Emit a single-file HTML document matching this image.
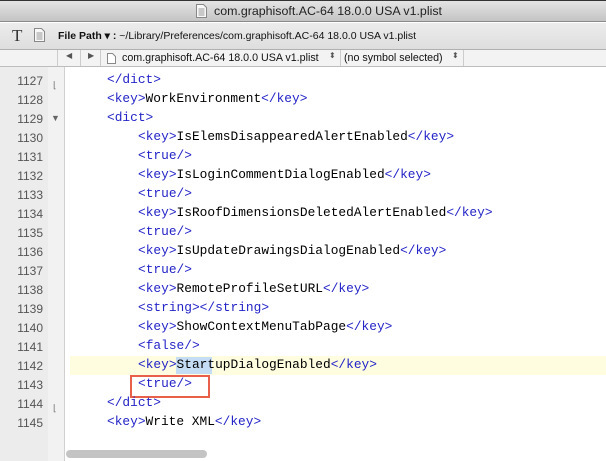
<!DOCTYPE html>
<html><head><style>
body{margin:0;width:606px;height:461px;overflow:hidden;background:#fff;font-family:"Liberation Sans",sans-serif;position:relative}
#title{position:absolute;left:0;top:0;width:606px;height:22px;background:linear-gradient(#e4e4e4,#c4c4c4);border-top:1px solid #333;box-sizing:border-box;border-bottom:1px solid #8a8a8a;font-size:12.4px;color:#222;}
#title span{position:absolute;left:214px;top:3px}
#tb{position:absolute;left:0;top:23px;width:606px;height:26px;background:linear-gradient(#ececec,#dedede);border-bottom:1px solid #b0b0b0;font-size:10.5px;}
#nav{position:absolute;left:0;top:50px;width:606px;height:16px;background:#f3f3f3;border-bottom:1px solid #bdbdbd;font-size:10.7px;color:#111}
#gut{position:absolute;left:0;top:67px;width:48px;height:394px;background:#ececec}
#fold{position:absolute;left:48px;top:67px;width:16px;height:394px;background:#f2f2f2;border-right:1px solid #d0d0d0}
.ln{position:absolute;left:0;width:43px;text-align:right;font-size:12px;color:#555;font-family:"Liberation Sans",sans-serif}
.c{position:absolute;font-family:"Liberation Mono",monospace;font-size:12.85px;color:#000;white-space:pre}
.t{color:#2424c8}
</style></head><body>
<div id="title"><svg style="position:absolute;left:196px;top:3px" width="11" height="14"><path d="M.5 .5h7l3 3v10H.5z" fill="#f8f8f8" stroke="#888"/><path d="M2.5 5h6M2.5 7h6M2.5 9h6M2.5 11h6" stroke="#999"/></svg><span>com.graphisoft.AC-64 18.0.0 USA v1.plist</span></div>
<div id="tb"><span style="position:absolute;left:12px;top:3px;font-family:'Liberation Serif',serif;font-size:17px;color:#333">T</span><svg style="position:absolute;left:34px;top:5px" width="11" height="14"><path d="M.5 .5h7l3 3v10H.5z" fill="#f8f8f8" stroke="#888"/><path d="M2.5 5h6M2.5 7h6M2.5 9h6M2.5 11h6" stroke="#999"/></svg><span style="position:absolute;left:58px;top:7px;color:#111"><b>File Path ▾ :</b> ~/Library/Preferences/com.graphisoft.AC-64 18.0.0 USA v1.plist</span></div>
<div id="nav">
<span style="position:absolute;left:57px;top:0;height:16px;border-left:1px solid #ccc"></span>
<span style="position:absolute;left:66px;top:1px;font-size:8px;color:#555">◀</span>
<span style="position:absolute;left:80px;top:0;height:16px;border-left:1px solid #ccc"></span>
<span style="position:absolute;left:88px;top:1px;font-size:8px;color:#555">▶</span>
<span style="position:absolute;left:100px;top:0;height:16px;border-left:1px solid #ccc"></span>
<svg style="position:absolute;left:107px;top:3px" width="9" height="11"><path d="M.5 .5h5l3 3v7H.5z" fill="#fff" stroke="#888"/></svg>
<span style="position:absolute;left:122px;top:2px">com.graphisoft.AC-64 18.0.0 USA v1.plist</span>
<span style="position:absolute;left:329px;top:1px;font-size:8px;color:#555">⬍</span>
<span style="position:absolute;left:340px;top:0;height:16px;border-left:1px solid #ccc"></span>
<span style="position:absolute;left:344px;top:2px">(no symbol selected)</span>
<span style="position:absolute;left:452px;top:1px;font-size:8px;color:#555">⬍</span>
<span style="position:absolute;left:463px;top:0;height:16px;border-left:1px solid #ccc"></span>
</div>
<div id="gut"></div><div id="fold"></div>
<div style="position:absolute;left:70px;top:356px;width:536px;height:19px;background:#fefde0"></div>
<div style="position:absolute;left:176px;top:357px;width:36px;height:17px;background:#c5dcf5"></div>
<div style="position:absolute;left:130px;top:375px;width:76px;height:19px;border:2px solid #e8604a"></div>
<div style="position:absolute;left:66px;top:450px;width:141px;height:8px;border-radius:4px;background:#c4c4c4"></div>
<span style="position:absolute;left:53px;top:80px;font-size:9px;color:#777">⌊</span>
<span style="position:absolute;left:51px;top:113px;font-size:9px;color:#666">▼</span>
<span style="position:absolute;left:53px;top:403px;font-size:9px;color:#777">⌊</span>
<div class="ln" style="top:74px">1127</div><div class="c" style="left:107px;top:72px"><span class="t">&lt;/dict&gt;</span></div>
<div class="ln" style="top:93px">1128</div><div class="c" style="left:107px;top:91px"><span class="t">&lt;key&gt;</span>WorkEnvironment<span class="t">&lt;/key&gt;</span></div>
<div class="ln" style="top:112px">1129</div><div class="c" style="left:107px;top:110px"><span class="t">&lt;dict&gt;</span></div>
<div class="ln" style="top:131px">1130</div><div class="c" style="left:138px;top:129px"><span class="t">&lt;key&gt;</span>IsElemsDisappearedAlertEnabled<span class="t">&lt;/key&gt;</span></div>
<div class="ln" style="top:150px">1131</div><div class="c" style="left:138px;top:148px"><span class="t">&lt;true/&gt;</span></div>
<div class="ln" style="top:169px">1132</div><div class="c" style="left:138px;top:167px"><span class="t">&lt;key&gt;</span>IsLoginCommentDialogEnabled<span class="t">&lt;/key&gt;</span></div>
<div class="ln" style="top:188px">1133</div><div class="c" style="left:138px;top:186px"><span class="t">&lt;true/&gt;</span></div>
<div class="ln" style="top:207px">1134</div><div class="c" style="left:138px;top:205px"><span class="t">&lt;key&gt;</span>IsRoofDimensionsDeletedAlertEnabled<span class="t">&lt;/key&gt;</span></div>
<div class="ln" style="top:226px">1135</div><div class="c" style="left:138px;top:224px"><span class="t">&lt;true/&gt;</span></div>
<div class="ln" style="top:245px">1136</div><div class="c" style="left:138px;top:243px"><span class="t">&lt;key&gt;</span>IsUpdateDrawingsDialogEnabled<span class="t">&lt;/key&gt;</span></div>
<div class="ln" style="top:264px">1137</div><div class="c" style="left:138px;top:262px"><span class="t">&lt;true/&gt;</span></div>
<div class="ln" style="top:283px">1138</div><div class="c" style="left:138px;top:281px"><span class="t">&lt;key&gt;</span>RemoteProfileSetURL<span class="t">&lt;/key&gt;</span></div>
<div class="ln" style="top:302px">1139</div><div class="c" style="left:138px;top:300px"><span class="t">&lt;string&gt;&lt;/string&gt;</span></div>
<div class="ln" style="top:321px">1140</div><div class="c" style="left:138px;top:319px"><span class="t">&lt;key&gt;</span>ShowContextMenuTabPage<span class="t">&lt;/key&gt;</span></div>
<div class="ln" style="top:340px">1141</div><div class="c" style="left:138px;top:338px"><span class="t">&lt;false/&gt;</span></div>
<div class="ln" style="top:359px">1142</div><div class="c" style="left:138px;top:357px"><span class="t">&lt;key&gt;</span>StartupDialogEnabled<span class="t">&lt;/key&gt;</span></div>
<div class="ln" style="top:378px">1143</div><div class="c" style="left:138px;top:376px"><span class="t">&lt;true/&gt;</span></div>
<div class="ln" style="top:397px">1144</div><div class="c" style="left:107px;top:395px"><span class="t">&lt;/dict&gt;</span></div>
<div class="ln" style="top:416px">1145</div><div class="c" style="left:107px;top:414px"><span class="t">&lt;key&gt;</span>Write XML<span class="t">&lt;/key&gt;</span></div>
</body></html>
